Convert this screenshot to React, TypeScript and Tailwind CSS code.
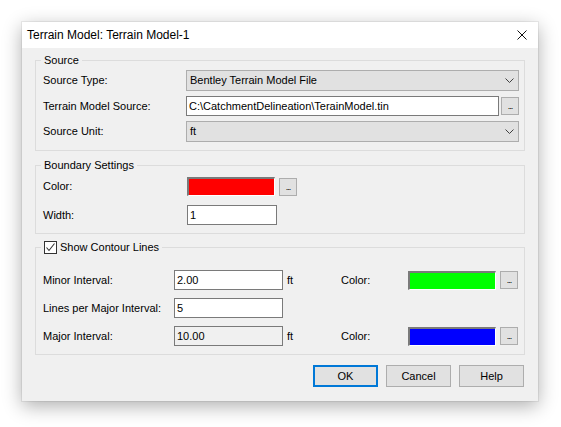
import type { ReactNode } from "react";

const FONT = { fontFamily: '"Liberation Sans", Arial, sans-serif' };

function Chevron() {
  return (
    <svg width="9" height="5" viewBox="0 0 9 5" className="shrink-0">
      <polyline points="0.5,0.5 4.5,4.5 8.5,0.5" fill="none" stroke="#404040" strokeWidth="1" />
    </svg>
  );
}

function Dropdown({ value }: { value: string }) {
  return (
    <div className="flex h-[21px] flex-1 items-center justify-between border border-[#adadad] bg-[#e1e1e1] pl-[3px] pr-[4px]">
      <span>{value}</span>
      <Chevron />
    </div>
  );
}

function TextBox({ value, className = "", disabled = false }: { value: string; className?: string; disabled?: boolean }) {
  return (
    <div
      className={`flex h-[20px] items-center border border-[#7a7a7a] pl-[2px] ${disabled ? "bg-[#f0f0f0]" : "bg-white"} ${className}`}
    >
      {value}
    </div>
  );
}

function Dots({ className = "" }: { className?: string }) {
  return (
    <div
      className={`flex h-[18px] w-[18px] shrink-0 items-end justify-center border border-[#adadad] bg-[#e1e1e1] pb-[3px] text-[9px] leading-none tracking-[-1px] ${className}`}
    >
      ...
    </div>
  );
}

function Swatch({ color }: { color: string }) {
  return (
    <div className="h-[19px] w-[88px] shrink-0 border-t-2 border-l-2 border-r border-b border-t-[#7a7a7a] border-l-[#7a7a7a] border-r-white border-b-white">
      <div className={`h-full w-full ${color}`} />
    </div>
  );
}

function Group({ legend, className, children }: { legend: ReactNode; className: string; children: ReactNode }) {
  return (
    <div className={`relative border border-[#dcdcdc] ${className}`}>
      <div className="absolute -top-[7px] left-[5px] flex h-[13px] items-center bg-[#f0f0f0] px-[3px] leading-[13px]">
        {legend}
      </div>
      {children}
    </div>
  );
}

function Btn({ label, primary = false }: { label: string; primary?: boolean }) {
  return (
    <div
      className={`flex h-[22px] w-[65px] items-center justify-center bg-[#e1e1e1] ${
        primary ? "border-2 border-[#0078d7]" : "border border-[#adadad]"
      }`}
    >
      {label}
    </div>
  );
}

export default function App() {
  return (
    <div className="h-[427px] w-[561px] bg-white pl-[22px] pt-[22px] text-[11px] text-black" style={FONT}>
      <div className="flex h-[379px] w-[516px] flex-col shadow-[0_0_0_1px_rgba(0,0,0,0.06),0_5px_18px_rgba(0,0,0,0.32)]">
        <div className="flex h-[26px] items-center justify-between bg-white pl-[5px] pr-[11px] text-[12px]">
          <span>Terrain Model: Terrain Model-1</span>
          <svg width="10" height="10" viewBox="0 0 10 10">
            <path d="M0.5 0.5 L9.5 9.5 M9.5 0.5 L0.5 9.5" stroke="#111" strokeWidth="1" fill="none" />
          </svg>
        </div>

        <div className="flex flex-1 flex-col bg-[#f0f0f0] px-[13px] pt-[12px]">
          <Group legend="Source" className="flex h-[91px] flex-col gap-[5px] pl-[7px] pr-[5px] pt-[9px]">
            <div className="flex items-center">
              <span className="w-[143px]">Source Type:</span>
              <Dropdown value="Bentley Terrain Model File" />
            </div>
            <div className="flex items-center">
              <span className="w-[143px]">Terrain Model Source:</span>
              <TextBox value="C:\CatchmentDelineation\TerainModel.tin" className="flex-1" />
              <Dots className="ml-[2px]" />
            </div>
            <div className="flex items-center">
              <span className="w-[143px]">Source Unit:</span>
              <Dropdown value="ft" />
            </div>
          </Group>

          <Group legend="Boundary Settings" className="mt-[14px] flex h-[69px] flex-col gap-[9px] pl-[7px] pt-[11px]">
            <div className="flex h-[19px] items-center">
              <span className="w-[144px]">Color:</span>
              <Swatch color="bg-[#ff0000]" />
              <Dots className="ml-[4px] h-[17px]" />
            </div>
            <div className="flex items-center">
              <span className="w-[144px]">Width:</span>
              <TextBox value="1" className="w-[90px]" />
            </div>
          </Group>

          <Group
            legend={
              <span className="flex items-center gap-[3px]">
                <span className="flex h-[13px] w-[13px] items-center justify-center border border-[#333] bg-white">
                  <svg width="11" height="11" viewBox="0 0 11 11">
                    <polyline points="1.5,5.5 4,8.5 9.5,1.5" fill="none" stroke="#333" strokeWidth="1.1" />
                  </svg>
                </span>
                <span>Show Contour Lines</span>
              </span>
            }
            className="mt-[13px] flex h-[108px] flex-col gap-[8px] pl-[7px] pt-[22px]"
          >
            <div className="flex items-center">
              <span className="w-[131px]">Minor Interval:</span>
              <TextBox value="2.00" className="w-[109px]" />
              <span className="ml-[4px] w-[54px]">ft</span>
              <span className="w-[67px]">Color:</span>
              <Swatch color="bg-[#00ff00]" />
              <Dots className="ml-[4px]" />
            </div>
            <div className="flex items-center">
              <span className="w-[131px]">Lines per Major Interval:</span>
              <TextBox value="5" className="w-[109px]" />
            </div>
            <div className="flex items-center">
              <span className="w-[131px]">Major Interval:</span>
              <TextBox value="10.00" className="w-[109px]" disabled />
              <span className="ml-[4px] w-[54px]">ft</span>
              <span className="w-[67px]">Color:</span>
              <Swatch color="bg-[#0000ff]" />
              <Dots className="ml-[4px]" />
            </div>
          </Group>

          <div className="mt-[10px] flex justify-end gap-[8px] pr-[1px]">
            <Btn label="OK" primary />
            <Btn label="Cancel" />
            <Btn label="Help" />
          </div>
        </div>
      </div>
    </div>
  );
}
